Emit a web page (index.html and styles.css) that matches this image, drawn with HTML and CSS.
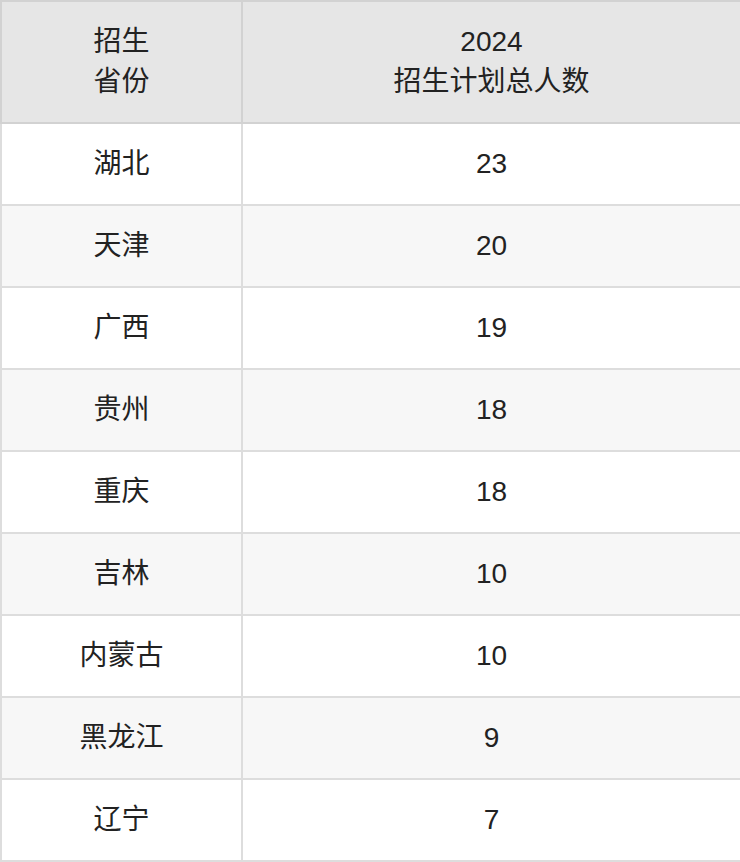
FILE: index.html
```html
<!DOCTYPE html>
<html lang="zh-CN">
<head>
<meta charset="utf-8">
<link rel="stylesheet" href="styles.css">
</head>
<body>
<table class="plan">
  <colgroup><col class="c1"><col class="c2"></colgroup>
  <thead>
    <tr><th>招生<br>省份</th><th>2024<br>招生计划总人数</th></tr>
  </thead>
  <tbody>
    <tr><td>湖北</td><td>23</td></tr>
    <tr><td>天津</td><td>20</td></tr>
    <tr><td>广西</td><td>19</td></tr>
    <tr><td>贵州</td><td>18</td></tr>
    <tr><td>重庆</td><td>18</td></tr>
    <tr><td>吉林</td><td>10</td></tr>
    <tr><td>内蒙古</td><td>10</td></tr>
    <tr><td>黑龙江</td><td>9</td></tr>
    <tr><td>辽宁</td><td>7</td></tr>
  </tbody>
</table>
</body>
</html>
```
FILE: styles.css
```css
html, body {
  margin: 0;
  padding: 0;
  background: #ffffff;
}
.plan {
  width: 740px;
  table-layout: fixed;
  border-collapse: collapse;
  font-family: "Liberation Sans", "Noto Sans CJK SC", sans-serif;
  font-size: 28px;
  color: #222222;
}
.c1 { width: 241px; }
.c2 { width: 499px; }
.plan th, .plan td {
  border: 2px solid #dddddd;
  text-align: center;
  vertical-align: middle;
  padding: 0;
  font-weight: normal;
  line-height: 40px;
}
.plan th {
  background: #e6e6e6;
  height: 120px;
  border-color: #d2d2d2;
}
.plan td {
  height: 80px;
}
.plan tbody tr:nth-child(even) td {
  background: #f7f7f7;
}
```
